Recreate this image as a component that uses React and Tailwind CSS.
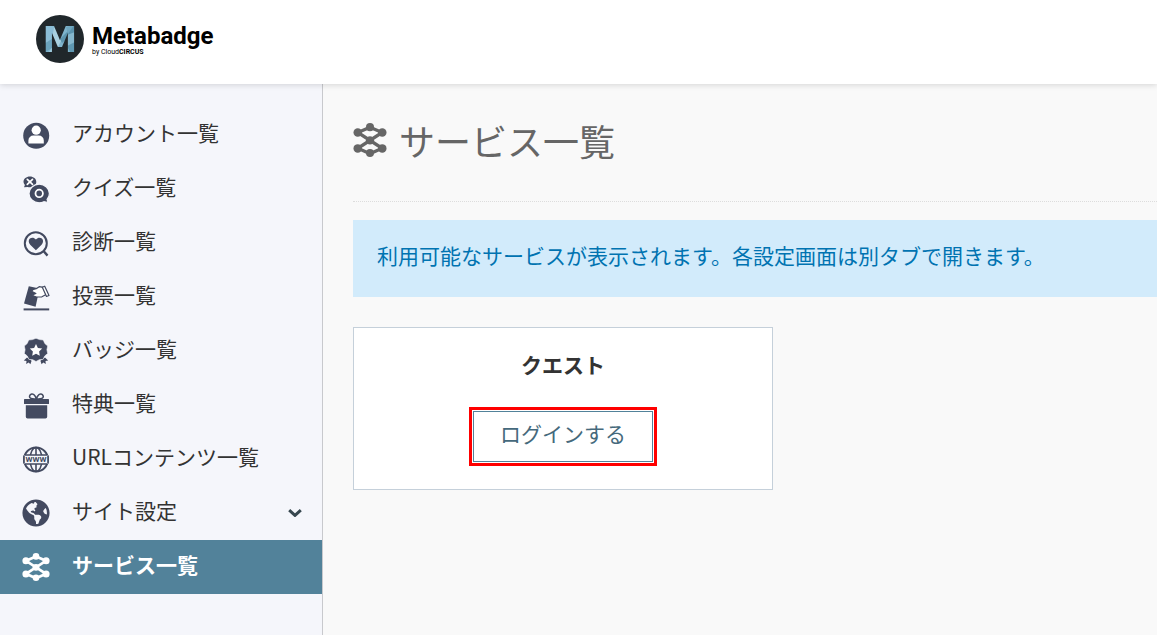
import { FaGlobeAmericas } from 'react-icons/fa';

/** アカウント */
function AccountIcon({ className }) {
    return (
        <svg className={className} viewBox="0 0 28 28" fill="currentColor" aria-hidden="true">
            <circle cx="14.2" cy="14.7" r="13" />
            <circle cx="14.2" cy="9.2" r="4.6" fill="#fff" />
            <path d="M6.4 22.4V19.6a5 5 0 0 1 5-5h5.4a5 5 0 0 1 5 5v2.8z" fill="#fff" />
        </svg>
    );
}

/** クイズ: ×と○の吹き出し */
function QuizIcon({ className }) {
    return (
        <svg className={className} viewBox="0 0 28 28" fill="currentColor" aria-hidden="true">
            <path d="M7.9 1.6c3.6 0 6.4 2.3 6.4 5.3s-2.8 5.3-6.4 5.3c-.8 0-1.6-.1-2.3-.3L2 12.2l.9-2.3A5 5 0 0 1 1.5 6.9c0-3 2.8-5.3 6.4-5.3z" />
            <path d="M5.3 4.4l5.2 5M10.5 4.4l-5.2 5" stroke="#fff" strokeWidth="1.7" strokeLinecap="round" />
            <path
                d="M17.2 9.2c5.7 0 10.2 4.2 10.2 9.3 0 2.3-.9 4.4-2.3 6l1.2 3.1-4.4-.9a11 11 0 0 1-4.7 1.1C11.5 27.8 7 23.6 7 18.5s4.5-9.3 10.2-9.3z"
                stroke="#f5f6fb"
                strokeWidth="1.2"
            />
            <circle cx="17.2" cy="18.4" r="3.7" fill="none" stroke="#fff" strokeWidth="1.8" />
        </svg>
    );
}

/** 診断: ハート入りの虫眼鏡 */
function DiagnosisIcon({ className }) {
    return (
        <svg className={className} viewBox="0 0 28 28" fill="currentColor" aria-hidden="true">
            <circle cx="13.8" cy="14.2" r="11" fill="none" stroke="currentColor" strokeWidth="2" />
            <path d="M21.5 22l4 4.6" stroke="currentColor" strokeWidth="2.4" />
            <path d="M13.9 21.2l-5.7-5.5c-1.9-1.9-1.9-4.7-.3-6.1 1.7-1.5 4.3-1.2 5.7.6l.3.4.3-.4c1.4-1.8 4-2.1 5.7-.6 1.6 1.4 1.6 4.2-.3 6.1z" />
        </svg>
    );
}

/** 投票: 投票用紙を持つ手 */
function VoteIcon({ className }) {
    return (
        <svg className={className} viewBox="0 0 28 28" fill="currentColor" aria-hidden="true">
            <path d="M6.8 3.2L17.5 5.600l-3.900 18.200L2 20.600z" />
            <path
                d="M9.600 8.200c.8-1.600 2.600-2.200 4.600-2.500l3-2 4.300.6 2.600 7.200-4.200 2.300-5.200.2c-1.900-.2-3.400-1-4.400-2l3.600-1.500z"
                fill="#fff"
                stroke="currentColor"
                strokeWidth="1.200"
                strokeLinejoin="round"
            />
            <path d="M20.300 4.300l2.400-1.100 4.300 9.300-2.500 1z" fill="#fff" stroke="currentColor" strokeWidth="1.200" strokeLinejoin="round" />
            <path d="M1.600 26.400h25.600" stroke="currentColor" strokeWidth="2" />
        </svg>
    );
}

/** バッジ */
function BadgeIcon({ className }) {
    return (
        <svg className={className} viewBox="0 0 28 28" fill="currentColor" aria-hidden="true">
            <path d="M5 20.500l4.600 3.200-1.200 3.500-1.700-1.800-2.500 1.500.3-2.900-2.700-.5zM23 20.500l-4.600 3.200 1.200 3.500 1.700-1.800 2.500 1.500-.3-2.900 2.700-.5z" />
            <path
                d="M14 1.200l3.500 1.400 3.800.4 1.500 3.500 2.900 2.500-.8 3.700.8 3.800-3 2.500-1.600 3.400-3.800.3L14 24.500l-3.300-1.800-3.800-.3-1.600-3.400-3-2.500.8-3.800-.8-3.700 2.900-2.500L6.700 3l3.800-.4z"
                stroke="#f5f6fb"
                strokeWidth=".6"
                strokeLinejoin="round"
            />
            <path d="M14 7l1.900 3.900 4.300.6-3.100 3 .7 4.300-3.800-2-3.800 2 .7-4.300-3.100-3 4.300-.6z" fill="#fff" />
        </svg>
    );
}

/** 特典: プレゼント箱 */
function GiftIcon({ className }) {
    return (
        <svg className={className} viewBox="0 0 28 28" fill="currentColor" aria-hidden="true">
            <rect x="2" y="8" width="25" height="5" rx=".6" />
            <path d="M3.800 14.200h21.400v11.600a1.800 1.800 0 0 1-1.800 1.800H5.600a1.800 1.800 0 0 1-1.800-1.800z" />
            <path
                d="M14.300 8C10 8.400 7 7.400 7.600 5c.6-2.300 3.500-2.600 4.900-.7.800 1 1.500 2.500 1.800 3.700zM14.500 8c4.300.4 7.300-.6 6.700-3-.6-2.300-3.500-2.600-4.900-.7-.8 1-1.500 2.500-1.800 3.700z"
                fill="none"
                stroke="currentColor"
                strokeWidth="1.500"
            />
        </svg>
    );
}

/** URLコンテンツ: WWW入りの地球儀 */
function WwwIcon({ className }) {
    return (
        <svg className={className} viewBox="0 0 28 28" fill="none" stroke="currentColor" strokeWidth="1.900" aria-hidden="true">
            <circle cx="14" cy="14.500" r="12" />
            <ellipse cx="14" cy="14.500" rx="6" ry="12" strokeWidth="1.600" />
            <path d="M14 2.500v24" strokeWidth="1.600" />
            <rect x="2" y="10" width="24" height="9" fill="#f5f6fb" stroke="none" />
            <path d="M2.500 10h23M2.500 19h23" strokeWidth="1.400" />
            <path d="M2 10.500v8M26 10.500v8" strokeWidth="1.600" />
            <text x="14" y="17.400" textAnchor="middle" fill="currentColor" stroke="none" className="font-['Roboto'] text-[8px] font-bold">
                WWW
            </text>
        </svg>
    );
}

/** サービス: ノードをつないだネットワーク */
function ServiceIcon({ className }) {
    return (
        <svg className={className} viewBox="0 0 28 28" fill="currentColor" aria-hidden="true">
            <path d="M14 3.500L4 7.800l20 13-10 4.500-10-4.500 20-13z" fill="none" stroke="currentColor" strokeWidth="2.700" />
            <circle cx="14" cy="3.400" r="3.300" />
            <circle cx="3.900" cy="7.800" r="3.500" />
            <circle cx="24.100" cy="7.800" r="3.500" />
            <circle cx="14" cy="14.300" r="3.400" />
            <circle cx="3.900" cy="20.900" r="3.500" />
            <circle cx="24.100" cy="20.900" r="3.500" />
            <circle cx="14" cy="24.700" r="3.300" />
        </svg>
    );
}

function Logo() {
    return (
        <a href="#" className="flex items-center gap-2 text-black">
            <svg className="size-12" viewBox="0 0 48 48" aria-hidden="true">
                <defs>
                    <clipPath id="logo-m">
                        <text x="24" y="37" textAnchor="middle" fontFamily="DejaVu Sans" fontWeight="700" fontSize="35">
                            M
                        </text>
                    </clipPath>
                </defs>
                <circle cx="24" cy="24" r="24" fill="#20272b" />
                <g clipPath="url(#logo-m)">
                    <path d="M8 8h32v32H8z" fill="#7fb4cd" />
                    <path d="M8 8l10 4-2 12-8 5z" fill="#8bbdd6" />
                    <path d="M18 12l8 12-4 8-6-8z" fill="#a9d0e0" />
                    <path d="M24 24l14-14v8l-12 10z" fill="#5b93ad" />
                    <path d="M30 12l8-2-6 9z" fill="#6fa6bf" />
                    <path d="M8 29l8-5v9l-8 5z" fill="#6ba3bd" />
                    <path d="M12 38l6-8v9z" fill="#9cc9dc" />
                    <path d="M31 20l8-3v10l-8 4z" fill="#86b7cd" />
                    <path d="M31 31l8-4v11l-4 1z" fill="#5f98b2" />
                </g>
            </svg>
            <span className="flex flex-col pt-0.5 font-['Roboto',sans-serif]">
                <span className="text-[24px] leading-6 font-bold">Metabadge</span>
                <span className="text-[7px] leading-2">
                    by Cloud<b>CIRCUS</b>
                </span>
            </span>
        </a>
    );
}

const menuItems = [
    { label: 'アカウント一覧', icon: AccountIcon },
    { label: 'クイズ一覧', icon: QuizIcon },
    { label: '診断一覧', icon: DiagnosisIcon },
    { label: '投票一覧', icon: VoteIcon },
    { label: 'バッジ一覧', icon: BadgeIcon },
    { label: '特典一覧', icon: GiftIcon },
    { label: 'URLコンテンツ一覧', icon: WwwIcon },
    { label: 'サイト設定', icon: FaGlobeAmericas, hasChildren: true },
    { label: 'サービス一覧', icon: ServiceIcon, active: true },
];

function MenuItem({ item }) {
    const Icon = item.icon;

    return (
        <li>
            <a
                href="#"
                aria-current={item.active ? 'page' : undefined}
                className={`flex h-[54px] items-center pr-5 pl-[22px] text-[21px] leading-8 ${
                    item.active ? 'bg-[#52829a] font-bold text-white' : 'text-[#333]'
                }`}
            >
                <Icon className={`size-7 shrink-0 ${item.active ? 'text-white' : 'text-[#434a60]'}`} />
                <span className="ml-[22px] flex-1 pb-1.5">{item.label}</span>
                {item.hasChildren && (
                    <svg className="h-2 w-3.5" viewBox="0 0 14 8" fill="none" stroke="#37474f" strokeWidth="3" aria-hidden="true">
                        <path d="M1.200 1.200L7 6.400l5.800-5.200" />
                    </svg>
                )}
            </a>
        </li>
    );
}

export default function App() {
    return (
        <div className="flex min-h-screen flex-col bg-[#f9f9f9] font-['Noto_Sans_CJK_JP',sans-serif] text-[#333]">
            <header className="z-10 flex h-[84px] items-center bg-white px-9 pb-1.5 shadow-[0_1px_6px_rgba(0,0,0,0.15)]">
                <Logo />
            </header>

            <div className="flex flex-1">
                {/* サイドメニュー */}
                <nav className="w-[323px] shrink-0 border-r border-[#c8c9cd] bg-[#f5f6fb] pt-6">
                    <ul>
                        {menuItems.map((item) => (
                            <MenuItem key={item.label} item={item} />
                        ))}
                    </ul>
                </nav>

                {/* メイン */}
                <main className="min-w-0 flex-1 pt-[30px] pl-[30px]">
                    <h1 className="flex items-center gap-3 border-b border-dotted border-[#ddd] pb-[35px] text-[36px] leading-[52px] text-[#666]">
                        <ServiceIcon className="size-[34px]" />
                        サービス一覧
                    </h1>

                    <p className="mt-[18px] bg-[#d2ebfb] px-6 pt-[19px] pb-[25px] text-[21px] leading-[33px] text-[#0073b1]">
                        利用可能なサービスが表示されます。各設定画面は別タブで開きます。
                    </p>

                    <section className="mt-[30px] flex w-[420px] flex-col items-center border border-[#c5d0da] bg-white pt-5 pb-[23px]">
                        <h2 className="text-[21px] leading-8 font-bold">クエスト</h2>
                        {/* ログインボタンは赤枠で強調 */}
                        <div className="mt-[27px] border-[3px] border-[#f00] p-px">
                            <button
                                type="button"
                                className="flex h-[51px] w-[180px] items-center justify-center border border-[#52829a] bg-white pb-1.5 text-[21px] text-[#45697c]"
                            >
                                ログインする
                            </button>
                        </div>
                    </section>
                </main>
            </div>
        </div>
    );
}
